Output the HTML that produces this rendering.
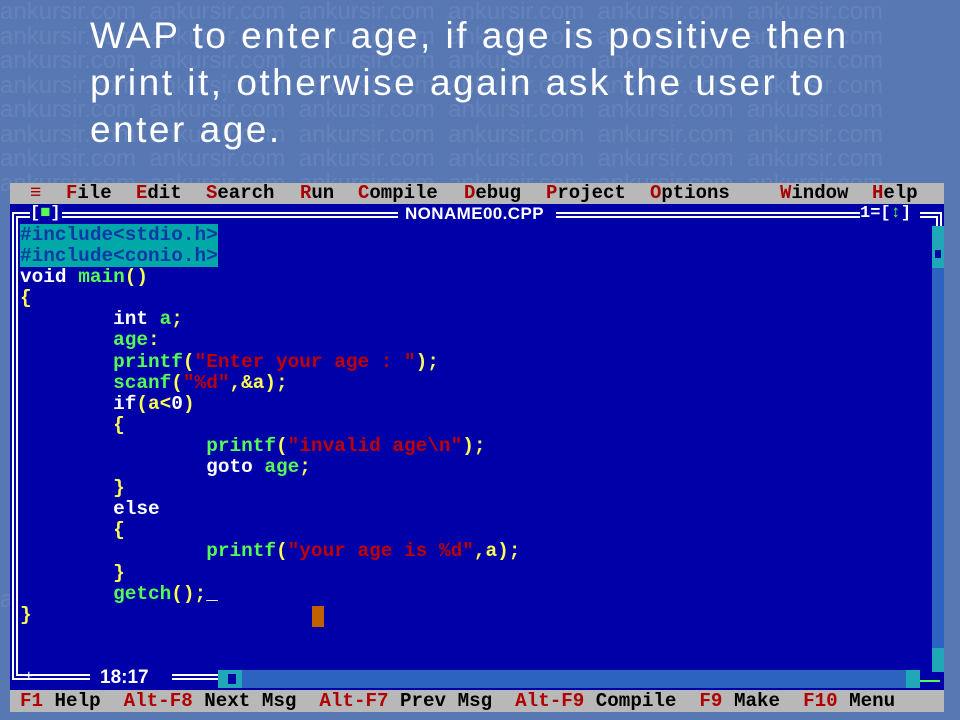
<!DOCTYPE html>
<html><head><meta charset="utf-8"><style>
body{margin:0;width:960px;height:720px;overflow:hidden;background:#5878b4;position:relative;font-family:"Liberation Sans",sans-serif}
.wm{position:absolute;left:0;top:0;width:960px;height:720px;color:rgba(255,255,255,0.08);font:24px/24.5px "Liberation Sans",sans-serif;white-space:pre;overflow:hidden}
.title{position:absolute;left:90px;top:12px;color:#fff;font:37px/47px "Liberation Sans",sans-serif;letter-spacing:2.5px;white-space:pre}
.a{position:absolute;white-space:pre}
.menu{position:absolute;left:10px;top:183px;width:934px;height:21px;background:#b8b8b8}
.m{position:absolute;top:183px;font:bold 19px/21px "Liberation Mono",monospace;color:#000;white-space:pre}
.m b{color:#a80000}
.ed{position:absolute;left:10px;top:204px;width:934px;height:486px;background:#0000a8}
.code{position:absolute;left:20px;top:225px;font:bold 19.4px/21.1px "Liberation Mono",monospace;color:#fff;white-space:pre}
.g{color:#54fc54}.y{color:#fcfc54}.r{color:#c00000}.w{color:#fff}
.hl{background:#00a8a8;color:#0a3aa8}
.st{position:absolute;left:10px;top:690px;width:934px;height:22px;background:#b8b8b8}
.s{position:absolute;top:690px;font:bold 19.2px/22px "Liberation Mono",monospace;color:#000;white-space:pre}
.s b{color:#b00000}
.ln{position:absolute;background:#fff}
</style></head><body>
<div class="wm">ankursir.com  ankursir.com  ankursir.com  ankursir.com  ankursir.com  ankursir.com
ankursir.com  ankursir.com  ankursir.com  ankursir.com  ankursir.com  ankursir.com
ankursir.com  ankursir.com  ankursir.com  ankursir.com  ankursir.com  ankursir.com
ankursir.com  ankursir.com  ankursir.com  ankursir.com  ankursir.com  ankursir.com
ankursir.com  ankursir.com  ankursir.com  ankursir.com  ankursir.com  ankursir.com
ankursir.com  ankursir.com  ankursir.com  ankursir.com  ankursir.com  ankursir.com
ankursir.com  ankursir.com  ankursir.com  ankursir.com  ankursir.com  ankursir.com
ankursir.com  ankursir.com  ankursir.com  ankursir.com  ankursir.com  ankursir.com
















ankursir.com  ankursir.com  ankursir.com  ankursir.com  ankursir.com  ankursir.com</div>
<div class="title">WAP to enter age, if age is positive then
print it, otherwise again ask the user to
enter age.</div>

<div class="menu"></div>
<div class="m" style="left:30px;color:#a80000">≡</div>
<div class="m" style="left:66px"><b>F</b>ile</div>
<div class="m" style="left:136px"><b>E</b>dit</div>
<div class="m" style="left:206px"><b>S</b>earch</div>
<div class="m" style="left:300px"><b>R</b>un</div>
<div class="m" style="left:358px"><b>C</b>ompile</div>
<div class="m" style="left:464px"><b>D</b>ebug</div>
<div class="m" style="left:546px"><b>P</b>roject</div>
<div class="m" style="left:650px"><b>O</b>ptions</div>
<div class="m" style="left:780px"><b>W</b>indow</div>
<div class="m" style="left:872px"><b>H</b>elp</div>

<div class="ed"></div>
<div class="ln" style="left:12px;top:212px;width:2px;height:468px"></div>
<div class="ln" style="left:16px;top:216px;width:2px;height:460px"></div>
<div class="ln" style="left:12px;top:212px;width:18px;height:2px"></div>
<div class="ln" style="left:16px;top:216px;width:14px;height:2px"></div>
<div class="ln" style="left:62px;top:212px;width:336px;height:2px"></div>
<div class="ln" style="left:62px;top:216px;width:336px;height:2px"></div>
<div class="ln" style="left:556px;top:212px;width:304px;height:2px"></div>
<div class="ln" style="left:556px;top:216px;width:304px;height:2px"></div>
<div class="ln" style="left:920px;top:212px;width:22px;height:2px"></div>
<div class="ln" style="left:920px;top:216px;width:18px;height:2px"></div>
<div class="ln" style="left:940px;top:212px;width:2px;height:14px"></div>
<div class="ln" style="left:936px;top:216px;width:2px;height:10px"></div>
<div class="ln" style="left:12px;top:678px;width:78px;height:2px"></div>
<div class="ln" style="left:16px;top:674px;width:74px;height:2px"></div>
<div class="ln" style="left:172px;top:674px;width:46px;height:2px"></div>
<div class="ln" style="left:172px;top:678px;width:46px;height:2px"></div>
<div class="a" style="left:30px;top:203px;font:bold 17px/22px 'Liberation Mono',monospace;color:#fff">[<span style="color:#54fc54">■</span>]</div>
<div class="a" style="left:405px;top:204px;font:bold 17px/20px 'Liberation Sans',sans-serif;color:#fff;letter-spacing:0.4px">NONAME00.CPP</div>
<div class="a" style="left:860px;top:203px;font:bold 17px/22px 'Liberation Mono',monospace;color:#fff">1=[<span style="color:#54fc54">↕</span>]</div>
<div class="a" style="left:100px;top:667px;font:bold 19px/22px 'Liberation Sans',sans-serif;color:#fff">18:17</div>
<div class="a" style="left:24px;top:666px;font:16px/22px 'Liberation Mono',monospace;color:#fff">+</div>
<div class="a" style="left:932px;top:226px;width:12px;height:446px;background:#2c62c0"></div>
<div class="a" style="left:932px;top:226px;width:12px;height:42px;background:#20a8b8"></div>
<div class="a" style="left:935px;top:250px;width:6px;height:8px;background:#0000a8"></div>
<div class="a" style="left:932px;top:648px;width:12px;height:24px;background:#20a8b8"></div>
<div class="a" style="left:218px;top:670px;width:702px;height:18px;background:#2c62c0"></div>
<div class="a" style="left:218px;top:670px;width:24px;height:18px;background:#20a8b8"></div>
<div class="a" style="left:228px;top:674px;width:8px;height:10px;background:#0000a8"></div>
<div class="a" style="left:906px;top:670px;width:14px;height:18px;background:#20a8b8"></div>
<div class="ln" style="left:920px;top:680px;width:20px;height:2px;background:#54fc54"></div>

<div class="code"><span class="hl">#include&lt;stdio.h&gt;</span>
<span class="hl">#include&lt;conio.h&gt;</span>
void <span class="g">main</span><span class="y">()</span>
<span class="y">{</span>
        int <span class="g">a</span><span class="y">;</span>
        <span class="g">age</span><span class="y">:</span>
        <span class="g">printf</span><span class="y">(</span><span class="r">"Enter your age : "</span><span class="y">);</span>
        <span class="g">scanf</span><span class="y">(</span><span class="r">"%d"</span><span class="y">,&amp;a);</span>
        if<span class="y">(a&lt;</span>0<span class="y">)</span>
        <span class="y">{</span>
                <span class="g">printf</span><span class="y">(</span><span class="r">"invalid age\n"</span><span class="y">);</span>
                goto <span class="g">age</span><span class="y">;</span>
        <span class="y">}</span>
        else
        <span class="y">{</span>
                <span class="g">printf</span><span class="y">(</span><span class="r">"your age is %d"</span><span class="y">,a);</span>
        <span class="y">}</span>
        <span class="g">getch</span><span class="y">();</span>_
<span class="y">}</span></div>
<div class="a" style="left:312px;top:606px;width:12px;height:21px;background:#c06000"></div>

<div class="st"></div>
<div class="s" style="left:20px"><b>F1</b> Help  <b>Alt-F8</b> Next Msg  <b>Alt-F7</b> Prev Msg  <b>Alt-F9</b> Compile  <b>F9</b> Make  <b>F10</b> Menu</div>
</body></html>
